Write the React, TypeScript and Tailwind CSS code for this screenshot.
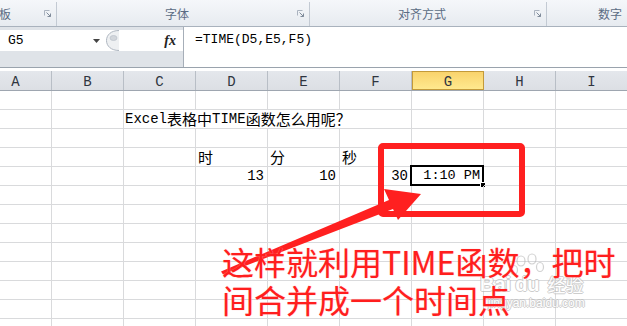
import React from 'react'

const COLS = ['A', 'B', 'C', 'D', 'E', 'F', 'G', 'H', 'I']
const ROWS = 13

function Launcher() {
  return (
    <svg width="8" height="8" viewBox="0 0 8 8" className="shrink-0">
      <path d="M0.5 5.5V0.5H5.5" fill="none" stroke="#aab3bf" />
      <path d="M2.5 2.5L6.5 6.5M6.5 3.5V6.5H3.5" fill="none" stroke="#7f8b9a" />
    </svg>
  )
}

function Cell({ children, className = '' }: { children?: React.ReactNode; className?: string }) {
  return (
    <div className={`relative flex h-[19px] items-center border-b border-r border-[#d9dadc] ${className}`}>
      {children}
    </div>
  )
}

function Latin({ children }: { children: React.ReactNode }) {
  return <span className="font-['Liberation_Mono',monospace] text-[14px]">{children}</span>
}

function GridRow({ row }: { row: number }) {
  if (row === 2) {
    return (
      <>
        <Cell />
        <Cell />
        <Cell className="col-span-4 pl-[1px] whitespace-nowrap text-[15px]">
          <Latin>Excel</Latin>表格中<Latin>TIME</Latin>函数怎么用呢？
        </Cell>
        <Cell />
        <Cell />
        <Cell />
      </>
    )
  }
  if (row === 4) {
    return (
      <>
        <Cell />
        <Cell />
        <Cell />
        <Cell className="pl-[2px] text-[15px]">时</Cell>
        <Cell className="pl-[2px] text-[15px]">分</Cell>
        <Cell className="pl-[2px] text-[15px]">秒</Cell>
        <Cell />
        <Cell />
        <Cell />
      </>
    )
  }
  if (row === 5) {
    return (
      <>
        <Cell />
        <Cell />
        <Cell />
        <Cell className="justify-end pr-[3px] font-['Liberation_Mono',monospace] text-[14px]">13</Cell>
        <Cell className="justify-end pr-[3px] font-['Liberation_Mono',monospace] text-[14px]">10</Cell>
        <Cell className="justify-end pr-[3px] font-['Liberation_Mono',monospace] text-[14px]">30</Cell>
        <Cell className="justify-end pr-[3px] font-['Liberation_Mono',monospace] text-[13.5px]">
          1:10 PM
          <div className="absolute -left-[2px] -top-[2px] -right-[1px] -bottom-[1px] border-2 border-black" />
          <div className="absolute -right-[3px] -bottom-[3px] h-[6px] w-[6px] border border-white bg-black" />
        </Cell>
        <Cell />
        <Cell />
      </>
    )
  }
  return (
    <>
      {COLS.map((c) => (
        <Cell key={c} />
      ))}
    </>
  )
}

export default function App() {
  return (
    <div className="relative h-[326px] w-[627px] overflow-hidden bg-white font-['Noto_Sans_CJK_SC',sans-serif] text-black">
      {/* ribbon group captions */}
      <div className="flex h-[27px] border-b border-[#a9b2bd] bg-gradient-to-b from-[#f5f7fa] to-[#e7ebf0] pt-[2px] text-[12px] leading-none text-[#5b6c84]">
        <div className="flex w-[57px] items-center justify-between border-r border-[#c3cad3] pr-[4px]">
          <span className="-ml-[1px]">板</span>
          <Launcher />
        </div>
        <div className="flex w-[253px] items-center border-r border-[#c3cad3] pr-[4px]">
          <span className="flex-1 text-center">字体</span>
          <Launcher />
        </div>
        <div className="flex w-[237px] items-center border-r border-[#c3cad3] pr-[4px]">
          <span className="flex-1 text-center">对齐方式</span>
          <Launcher />
        </div>
        <div className="flex flex-1 items-center pl-[51px]">数字</div>
      </div>

      {/* formula bar */}
      <div className="flex h-[41px] border-b border-[#9aa3ad]">
        <div className="flex w-[184px] flex-col border-r border-[#a6aeb8] bg-[#dfe3e8] pt-[3px]">
          <div className="flex h-[21px] items-center bg-white">
            <div className="flex w-[104px] items-center justify-between pl-[8px] pr-[4px]">
              <span className="font-['Liberation_Mono',monospace] text-[13px]">G5</span>
              <svg width="7" height="4" viewBox="0 0 7 4">
                <path d="M0 0H7L3.5 4Z" fill="#444" />
              </svg>
            </div>
            <svg width="16" height="21" viewBox="0 0 16 21" className="shrink-0">
              <path d="M15 0.5C7 0.5 2.5 5 2.5 10.5S7 20.5 15 20.5" fill="#eef0f2" stroke="#aeb6c0" />
              <ellipse cx="9.5" cy="8" rx="3.5" ry="2.5" fill="#d2d6db" stroke="#bcc3cb" strokeWidth="0.8" />
            </svg>
            <div className="flex-1" />
            <span className="pr-[7px] font-['Liberation_Serif',serif] text-[14px] font-bold italic leading-none text-[#222]">
              fx
            </span>
          </div>
        </div>
        <div className="flex-1 bg-white pl-[11px] pt-[5px] font-['Liberation_Mono',monospace] text-[13px] leading-[16px]">
          =TIME(D5,E5,F5)
        </div>
      </div>

      <div className="h-[3px] bg-white" />

      {/* column headers */}
      <div className="-ml-[20px] grid h-[20px] grid-cols-[repeat(9,72px)] border-b border-[#9ea6b0] bg-gradient-to-b from-[#e4e7ec] to-[#dcdfe4] font-['Liberation_Mono',monospace] text-[14px] leading-none text-[#2f3540]">
        {COLS.map((c) =>
          c === 'G' ? (
            <div
              key={c}
              className="flex items-center justify-center border border-[#c39a3a] bg-gradient-to-b from-[#f9d36c] to-[#ffe98e] pt-[2px]"
            >
              {c}
            </div>
          ) : (
            <div key={c} className="flex items-center justify-center border-r border-[#b8bec6] pt-[2px]">
              {c}
            </div>
          ),
        )}
      </div>

      {/* cells */}
      <div className="-ml-[20px] grid grid-cols-[repeat(9,72px)]">
        {Array.from({ length: ROWS }, (_, i) => (
          <GridRow key={i} row={i + 1} />
        ))}
      </div>

      {/* annotation: red box */}
      <div className="absolute left-[378px] top-[143px] h-[74px] w-[147px] rounded-[5px] border-[6px] border-[#ff2020]" />

      {/* annotation: arrow */}
      <svg className="absolute left-0 top-0" width="627" height="326" viewBox="0 0 627 326">
        <polygon
          points="221,271.5 389,200 384,189 421,194 398,220 393,209 223,274.5"
          fill="#ff2020"
        />
      </svg>

      {/* watermark paw */}
      <svg className="absolute left-[508px] top-[252px] opacity-60" width="42" height="40" viewBox="0 0 42 40">
        <g fill="none" stroke="#b5b5b5" strokeWidth="1.2">
          <ellipse cx="13" cy="9" rx="4" ry="5" />
          <ellipse cx="24" cy="7" rx="4" ry="5" />
          <ellipse cx="6" cy="18" rx="3.5" ry="4.5" />
          <ellipse cx="32" cy="15" rx="3.5" ry="4.5" />
        </g>
      </svg>

      {/* watermark text */}
      <div className="absolute left-[480px] top-[275px] flex flex-col items-start leading-none text-white opacity-70 [text-shadow:1px_0_#b8b8b8,-1px_0_#b8b8b8,0_1px_#b8b8b8,0_-1px_#b8b8b8]">
        <div className="flex items-end text-[20px] font-bold leading-[18px]">
          <span className="font-['Liberation_Sans',sans-serif]">Bai</span>
          <span className="ml-[4px] font-['Liberation_Sans',sans-serif]">du</span>
          <span className="ml-[8px] text-[18px] font-normal">经验</span>
        </div>
        <span className="ml-[8px] mt-[4px] font-['Liberation_Sans',sans-serif] text-[12px] leading-[12px]">
          jingyan.baidu.com
        </span>
      </div>

      {/* annotation: caption */}
      <div className="absolute left-[222px] top-[242px] text-[32px] leading-[38px] text-[#ff1e1e] [text-shadow:0_0_1px_#ffa0a0]">
        <div className="whitespace-nowrap">这样就利用TIME函数，把时</div>
        <div className="whitespace-nowrap">间合并成一个时间点</div>
      </div>
    </div>
  )
}
